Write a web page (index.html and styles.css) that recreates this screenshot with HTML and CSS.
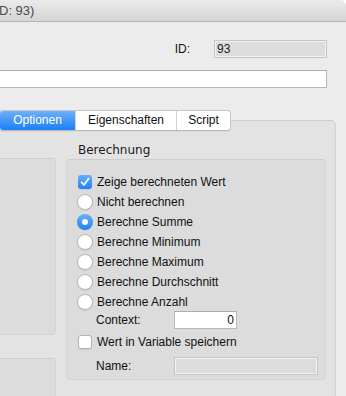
FILE: index.html
```html
<!DOCTYPE html>
<html lang="de">
<head>
<meta charset="utf-8">
<title>Feld (ID: 93)</title>
<link rel="stylesheet" href="styles.css">
</head>
<body>
<div class="window">
  <div class="titlebar"><span class="title">D: 93)</span></div>
  <div class="content">
    <div class="id-row">
      <span class="id-label">ID:</span>
      <div class="field field-disabled id-field">93</div>
    </div>
    <div class="field field-text wide-field"></div>
    <div class="tabbox">
      <div class="tabs">
        <div class="tab tab-sel tab-opt">Optionen</div>
        <div class="tab tab-eig">Eigenschaften</div>
        <div class="tab tab-scr">Script</div>
      </div>
      <div class="panes">
        <div class="leftcol">
          <div class="lbox lbox1"></div>
          <div class="lbox lbox2"></div>
        </div>
        <div class="rightcol">
          <div class="group-title">Berechnung</div>
          <div class="group">
            <div class="row">
              <span class="cb cb-on"><svg viewBox="0 0 14 14" width="14" height="14"><path d="M3.6 7.4 L6 10 L10.6 3.6" fill="none" stroke="#fff" stroke-width="1.7" stroke-linecap="round" stroke-linejoin="round"/></svg></span>
              <span>Zeige berechneten Wert</span>
            </div>
            <div class="row"><span class="radio"></span><span>Nicht berechnen</span></div>
            <div class="row"><span class="radio radio-on"></span><span>Berechne Summe</span></div>
            <div class="row"><span class="radio"></span><span>Berechne Minimum</span></div>
            <div class="row"><span class="radio"></span><span>Berechne Maximum</span></div>
            <div class="row"><span class="radio"></span><span>Berechne Durchschnitt</span></div>
            <div class="row"><span class="radio"></span><span>Berechne Anzahl</span></div>
            <div class="row row-context">
              <span class="lbl">Context:</span>
              <div class="field field-text ctx-field">0</div>
            </div>
            <div class="row row-wert">
              <span class="cb"></span>
              <span>Wert in Variable speichern</span>
            </div>
            <div class="row row-name">
              <span class="lbl">Name:</span>
              <div class="field field-disabled name-field"></div>
            </div>
          </div>
        </div>
      </div>
    </div>
  </div>
</div>
</body>
</html>
```

FILE: styles.css
```css
html, body {
  margin: 0;
  padding: 0;
}
body {
  background: #ffffff;
  width: 346px;
  height: 396px;
  overflow: hidden;
  font-family: "Liberation Sans", Arial, sans-serif;
  font-size: 12px;
  color: #111;
}
.window {
  width: 346px;
  height: 396px;
  background: #ececec;
  border-top-right-radius: 6px;
  overflow: hidden;
}
.titlebar {
  height: 21px;
  border-bottom: 1px solid #b4b4b4;
  background: linear-gradient(#ebebeb, #d5d5d5);
  display: flex;
  align-items: center;
  font-size: 13px;
  line-height: 21px;
  color: #4a4a4a;
}
.title {
  margin-left: -1px;
}
.content {
  padding-right: 19px;
}
.id-row {
  margin-top: 18px;
  height: 18px;
  display: flex;
  justify-content: flex-end;
  align-items: center;
}
.id-label {
  margin-right: 24px;
}
.field {
  height: 18px;
  box-sizing: border-box;
  line-height: 16px;
}
.field-disabled {
  background: #dcdcdc;
  border: 1px solid #c4c4c4;
  box-shadow: inset 0 0 0 1px #f3f3f3;
}
.field-text {
  background: #ffffff;
  border: 1px solid #b8b8b8;
  border-top-color: #adadad;
}
.id-field {
  width: 113px;
  padding-left: 2px;
  color: #222;
}
.wide-field {
  margin-top: 12px;
  margin-left: -10px;
}
.tabbox {
  margin-top: 32px;
  margin-left: -60px;
  width: 396px;
  height: 320px;
  box-sizing: border-box;
  background: #e3e3e3;
  border: 1px solid #d2d2d2;
  border-top-color: #cdcdcd;
  border-radius: 5px;
}
.tabs {
  display: flex;
  width: max-content;
  height: 21px;
  box-sizing: border-box;
  margin-top: -11px;
  margin-left: 58px;
  background: #ffffff;
  border: 1px solid #c6c6c6;
  border-bottom-color: #b8b8b8;
  border-radius: 4px;
  overflow: hidden;
  box-shadow: 0 1px 0 rgba(0, 0, 0, 0.04);
}
.tab {
  height: 19px;
  line-height: 19px;
  text-align: center;
  color: #111;
  box-sizing: border-box;
}
.tab-opt {
  width: 75px;
}
.tab-eig {
  width: 101px;
  border-left: 1px solid #d4d4d4;
}
.tab-scr {
  width: 54px;
  border-left: 1px solid #d4d4d4;
}
.tab-sel {
  color: #ffffff;
  background: linear-gradient(#6cb1fa, #1c7ff6);
}
.panes {
  display: flex;
  gap: 10px;
  padding-left: 11px;
}
.leftcol {
  width: 104px;
  padding-top: 27px;
  display: flex;
  flex-direction: column;
  gap: 23px;
}
.lbox {
  box-sizing: border-box;
  background: #dcdcdc;
  border: 1px solid #d3d3d3;
  border-top-color: #cecece;
  border-radius: 4px;
}
.lbox1 {
  height: 177px;
}
.lbox2 {
  height: 80px;
}
.rightcol {
  width: 260px;
  padding-top: 11px;
}
.group-title {
  font-family: "DejaVu Sans", sans-serif;
  font-size: 12px;
  line-height: 16px;
  height: 16px;
  padding-left: 12px;
  margin-bottom: 1px;
  color: #1a1a1a;
}
.group {
  height: 221px;
  box-sizing: border-box;
  background: #dcdcdc;
  border: 1px solid #d3d3d3;
  border-top-color: #cdcdcd;
  border-radius: 4px;
  padding: 12px 0 4px 11px;
}
.row {
  display: flex;
  align-items: center;
  height: 20px;
  white-space: nowrap;
}
.cb {
  width: 14px;
  height: 14px;
  box-sizing: border-box;
  margin-right: 5px;
  border-radius: 3px;
  background: #ffffff;
  border: 1px solid #b3b3b3;
  box-shadow: 0 1px 1px rgba(0, 0, 0, 0.08);
  display: flex;
}
.cb-on {
  border: none;
  background: linear-gradient(#69aefa, #1e80f6);
}
.cb svg {
  display: block;
}
.radio {
  width: 16px;
  height: 16px;
  box-sizing: border-box;
  margin-left: -1px;
  margin-right: 4px;
  border-radius: 50%;
  background: #ffffff;
  border: 1px solid #b6b6b6;
  box-shadow: 0 1px 1px rgba(0, 0, 0, 0.08);
  display: flex;
  align-items: center;
  justify-content: center;
}
.radio-on {
  border: none;
  background: linear-gradient(#69aefa, #1e80f6);
}
.radio-on::after {
  content: "";
  width: 6px;
  height: 6px;
  border-radius: 50%;
  background: #ffffff;
}
.lbl {
  margin-left: 18px;
  width: 78px;
}
.row-context {
  height: 18px;
  margin-top: -1px;
}
.ctx-field {
  width: 63px;
  text-align: right;
  padding-right: 2px;
  color: #111;
}
.row-wert {
  margin-top: 3px;
}
.row-name {
  height: 18px;
  margin-top: 5px;
}
.name-field {
  width: 144px;
}
```
